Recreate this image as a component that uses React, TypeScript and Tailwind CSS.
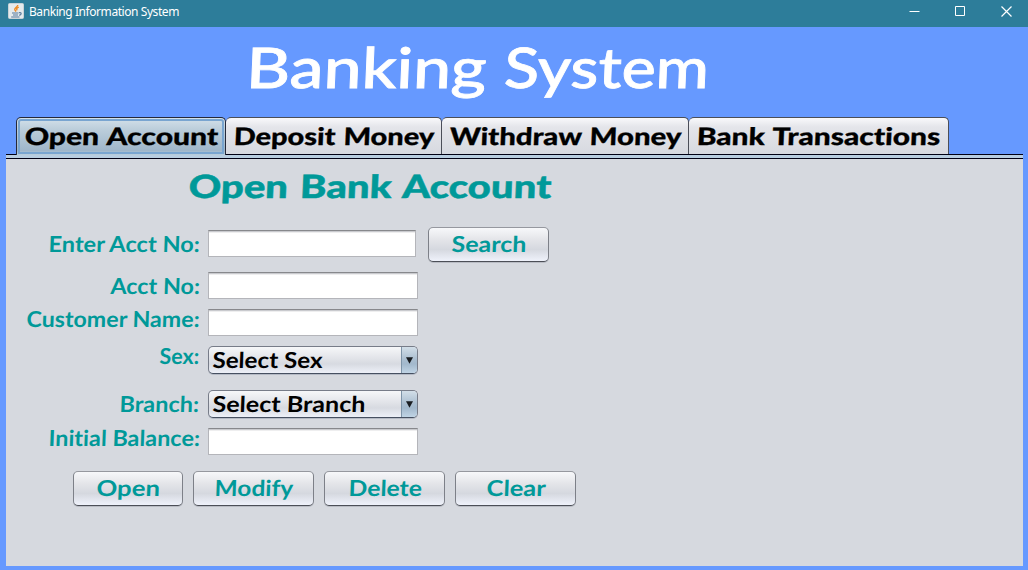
import { useLayoutEffect, useRef, useState } from "react";
import type { ReactNode } from "react";

/** Text stretched horizontally to fill a given width, imitating a wide humanist face. */
function FitText({ width, className, children }: { width: number; className: string; children: string }) {
  const ref = useRef<HTMLSpanElement>(null);
  const [scale, setScale] = useState(1);
  useLayoutEffect(() => {
    if (ref.current) setScale(width / ref.current.offsetWidth);
  }, [width, children]);
  return (
    <span
      className={"block shrink-0 text-left whitespace-nowrap [font-variant-ligatures:none] " + className}
      style={{ width }}
    >
      <span
        ref={ref}
        className="inline-block origin-bottom-left whitespace-nowrap align-top"
        style={{ transform: `scaleX(${scale}) skewX(-2deg)` }}
      >
        {children}
      </span>
    </span>
  );
}

function Tab({ label, width, className, active }: { label: string; width: number; className: string; active?: boolean }) {
  const base = "relative flex shrink-0 rounded-t-[5px] border-t border-r pl-[7px] ";
  const look = active
    ? "h-[38px] border-l border-[#25293a] bg-[linear-gradient(#d4e1ea_0%,#bccedb_30%,#9fb6ca_88%,#b9cede_100%)] "
    : "h-[37px] border-[#4b4e58] bg-[linear-gradient(#f9f9fb_0%,#e4e5ea_25%,#d7d9e0_100%)] ";
  return (
    <button className={base + look + className}>
      {active && <span className="absolute top-px right-px bottom-px left-px rounded-t-[3px] border-2 border-[#79a5d0]" />}
      <FitText
        width={width}
        className="relative h-[34px] font-[Lato,sans-serif] text-[24px] leading-[36px] font-black text-black [word-spacing:1px] [-webkit-text-stroke:0.3px_black]"
      >
        {label}
      </FitText>
    </button>
  );
}

function Button({ label, width, className }: { label: string; width: number; className: string }) {
  return (
    <button
      className={
        "flex h-[35px] shrink-0 justify-center rounded-[5px] border border-[#7d8088] border-t-[#96989f] border-b-[#4c4f57] bg-[linear-gradient(#f7f8fa_0%,#e4e5e9_35%,#d5d8df_65%,#eff2fb_100%)] pr-px shadow-[0_1px_0_#b9bcc4] " +
        className
      }
    >
      <FitText width={width} className="font-[Lato,sans-serif] text-[22px] leading-[32px] font-bold text-[#009999]">
        {label}
      </FitText>
    </button>
  );
}

function Field({ className }: { className: string }) {
  return (
    <input
      className={
        "block h-[27px] border border-[#b4b5ba] border-t-[#87888c] bg-white shadow-[inset_0_1px_0_#c9cace,inset_0_2px_0_#eeeeef] outline-none " +
        className
      }
    />
  );
}

function Select({ label, width }: { label: string; width: number }) {
  return (
    <div className="flex h-[28px] w-[210px] overflow-hidden rounded-[5px] border border-[#777c88] border-b-[#465061] bg-[linear-gradient(#f6f7f9_0%,#e1e3e8_45%,#d7dae1_65%,#edf0f8_100%)] pl-[3px] shadow-[0_1px_0_#b5bac5]">
      <FitText width={width} className="font-[Lato,sans-serif] text-[22px] leading-[25px] font-bold text-black">
        {label}
      </FitText>
      <span className="ml-auto flex w-[16px] items-center justify-center border-l border-[#7e94a8] bg-[linear-gradient(#d2dee8_0%,#a9bdcf_50%,#a2b8cc_65%,#c0d4e5_100%)]">
        <svg width="7" height="7" viewBox="0 0 7 7" fill="#191c20">
          <path d="M0 0.3H7L3.5 6.7Z" />
        </svg>
      </span>
    </div>
  );
}

function Row({ label, width, className, raised, children }: { label: string; width: number; className: string; raised?: boolean; children: ReactNode }) {
  return (
    <div className={"flex h-[28px] " + className}>
      <div className="flex w-[193px] justify-end">
        <FitText
          width={width}
          className={"font-[Lato,sans-serif] text-[22px] leading-[28px] font-bold text-[#009999] " + (raised ? "-mt-1" : "")}
        >
          {label}
        </FitText>
      </div>
      <div className="ml-[9px] flex">{children}</div>
    </div>
  );
}

function JavaIcon() {
  return (
    <svg width="16" height="16" viewBox="0 0 16 16" fill="none">
      <rect x="0.5" y="0.5" width="15" height="15" rx="1" fill="#e4eaed" stroke="#c9d2d6" />
      <path d="M9.8 2C9.8 4 5.6 5 7 7.2L8 8.6M10.8 4.2C8.2 5.2 8.4 6 9.2 7.4" stroke="#ee8a24" strokeWidth="1.4" />
      <path d="M4 10H10.5M5 12H10M3.2 14H11.5M11 9.7C14 9 13.8 12 11 12.2" stroke="#56799b" strokeWidth="1.1" />
    </svg>
  );
}

export default function App() {
  const titleFont =
    "font-[Lato,sans-serif] text-[56px] leading-[67px] font-medium text-white [-webkit-text-stroke:0.8px_white]";
  return (
    <div className="flex h-[570px] w-[1028px] flex-col overflow-hidden bg-[#6699ff]">
      <header className="flex h-[27px] shrink-0 items-start bg-[#2d7d9a] pl-[8px] text-white">
        <div className="mt-[3px]">
          <JavaIcon />
        </div>
        <span className="ml-[5px] block font-['Noto_Sans',sans-serif] text-[12px] leading-[24px] tracking-[-0.43px] whitespace-nowrap">
          Banking Information System
        </span>
        <div className="mt-[6px] mr-[16px] ml-auto flex gap-[35px]">
          <svg width="11" height="11" viewBox="0 0 11 11" stroke="white"><path d="M0.5 5.5H10.5" /></svg>
          <svg width="11" height="11" viewBox="0 0 11 11" fill="none" stroke="white"><path d="M0.5 0.5H9.5V9.5H0.5Z" /></svg>
          <svg width="11" height="11" viewBox="0 0 11 11" stroke="white" strokeWidth="1.2"><path d="M0.5 0.5L10.5 10.5M10.5 0.5L0.5 10.5" /></svg>
        </div>
      </header>

      <h1 className="flex h-[90px] shrink-0 gap-[18px] pt-[6px] pl-[245px]">
        <FitText width={240} className={titleFont}>Banking</FitText>
        <FitText width={205} className={titleFont}>System</FitText>
      </h1>

      <nav className="z-10 flex h-[38px] shrink-0 pl-[16px]">
        <Tab label="Open Account" width={194} className="w-[210px]" active />
        <Tab label="Deposit Money" width={200} className="w-[216px]" />
        <Tab label="Withdraw Money" width={232} className="w-[247px]" />
        <Tab label="Bank Transactions" width={244} className="w-[260px]" />
      </nav>

      <main className="mr-[5px] ml-[6px] -mt-px h-[412px] bg-[#d6d9df]">
        <div className="h-[5px] border-y border-[#000014] bg-[#b8cde0]" />
        <h2 className="flex h-[71px] pt-[8px] pl-[182px]">
          <FitText
            width={362}
            className="font-[Lato,sans-serif] text-[32px] leading-[38px] font-black text-[#009999] [word-spacing:2px] [-webkit-text-stroke:0.5px_#009999]"
          >
            Open Bank Account
          </FitText>
        </h2>
        <Row label="Enter Acct No:" width={151} className="mb-[14px]">
          <Field className="w-[208px]" />
          <Button label="Search" width={75} className="-mt-[3px] ml-[12px] w-[121px]" />
        </Row>
        <Row label="Acct No:" width={89} className=""><Field className="w-[210px]" /></Row>
        <Row label="Customer Name:" width={173} className="mt-[9px]" raised><Field className="w-[210px]" /></Row>
        <Row label="Sex:" width={40} className="mt-[9px]" raised><Select label="Select Sex" width={110} /></Row>
        <Row label="Branch:" width={80} className="mt-[16px]"><Select label="Select Branch" width={153} /></Row>
        <Row label="Initial Balance:" width={151} className="mt-[10px]" raised><Field className="w-[210px]" /></Row>
        <div className="mt-[15px] flex gap-[10px] pl-[67px]">
          <Button label="Open" width={63} className="w-[110px]" />
          <Button label="Modify" width={79} className="w-[121px]" />
          <Button label="Delete" width={73} className="w-[121px]" />
          <Button label="Clear" width={59} className="w-[121px]" />
        </div>
      </main>
    </div>
  );
}
